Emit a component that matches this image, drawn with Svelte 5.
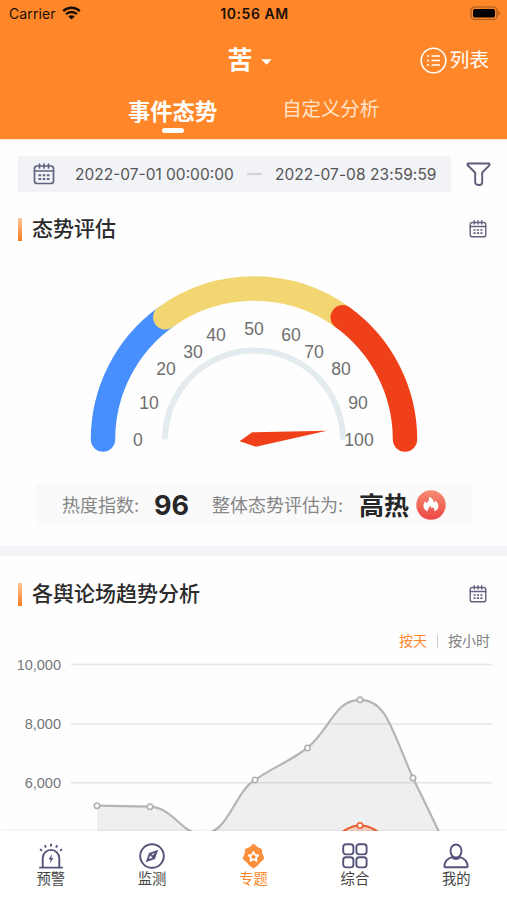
<script lang="ts">
  type Tab = { key: string; label: string };

  const tabs: Tab[] = [
    { key: 'alert', label: '预警' },
    { key: 'monitor', label: '监测' },
    { key: 'topic', label: '专题' },
    { key: 'overview', label: '综合' },
    { key: 'mine', label: '我的' },
  ];

  let activeTab = $state('topic');
  let view = $state<'trend' | 'custom'>('trend');
  let unit = $state<'day' | 'hour'>('day');

  const score = 96;

  // Gauge geometry, in svg units.
  const CX = 254;
  const CY = 196.5;

  function polar(r: number, value: number) {
    const a = Math.PI * (1 - value / 100);
    return [CX + r * Math.cos(a), CY - r * Math.sin(a)];
  }

  function arc(r: number, from: number, to: number) {
    const [x1, y1] = polar(r, from);
    const [x2, y2] = polar(r, to);
    return `M${x1} ${y1}A${r} ${r} 0 0 1 ${x2} ${y2}`;
  }

  const bands = [
    { from: 0, to: 30, color: '#468ffd' },
    { from: 30, to: 70, color: '#f2d672' },
    { from: 70, to: 100, color: '#ef4019' },
  ];

  const ticks = [
    { v: 0, x: 138, y: 197 },
    { v: 10, x: 149, y: 160 },
    { v: 20, x: 166, y: 126 },
    { v: 30, x: 193, y: 109 },
    { v: 40, x: 216, y: 91.5 },
    { v: 50, x: 254, y: 86 },
    { v: 60, x: 291, y: 91.5 },
    { v: 70, x: 314, y: 109 },
    { v: 80, x: 341, y: 126 },
    { v: 90, x: 358, y: 160 },
    { v: 100, x: 359, y: 197 },
  ];

  const needleAngle = (score / 100) * 180 - 180;

  // Trend chart
  const grid = [
    { label: '10,000', y: 13.5 },
    { label: '8,000', y: 73 },
    { label: '6,000', y: 131.7 },
  ];
  const totalLine =
    'M97 154.7L150 155.7C174 157 181 183 202 183C229 183 234 141 255 129C273 116 284 114 307.5 97C331 77 335 48.8 360 48.8C386 48.8 391 77 413 127C427 156 438 178 452 209';
  const totalPoints = [
    [97, 154.7],
    [150, 155.7],
    [202, 183.5],
    [255, 129],
    [307.5, 97],
    [360, 48.8],
    [413, 127],
  ];
  const hotLine = 'M307 205C331 198 340 174.5 360 174.5C381 174.5 389 198 413 205';
</script>

{#snippet calendar(size: number)}
  <svg class="icon" width={size} height={size} viewBox="0 0 22 22">
    <rect x="1.5" y="3" width="19" height="17.5" rx="2.6" />
    <path d="M1.5 8H20.5M6.5 1V5M11 1V5M15.5 1V5" />
    <path class="dots" d="M5.5 12.2H16.5M5.5 16H16.5" />
  </svg>
{/snippet}

<div class="app">
  <header>
    <div class="status">
      <span class="carrier">
        Carrier
        <svg width="19" height="14" viewBox="0 0 19 14">
          <path d="M1.2 5.1A12 12 0 0 1 17.8 5.1M4.1 8.2A7.7 7.7 0 0 1 14.9 8.2" />
          <path class="solid" d="M9.5 13.6L6.3 10.5A4.6 4.6 0 0 1 12.7 10.5Z" />
        </svg>
      </span>
      <span class="clock">10:56 AM</span>
      <svg class="battery" width="31" height="15" viewBox="0 0 31 15">
        <rect class="shell" x="1" y="1" width="26" height="12.5" rx="3.6" />
        <rect x="3" y="3" width="22" height="8.5" rx="1.8" />
        <path class="nub" d="M28.3 5V9.5C30.3 9 30.3 5.5 28.3 5Z" />
      </svg>
    </div>

    <div class="nav">
      <span></span>
      <button class="topic">
        苦
        <svg width="11" height="6" viewBox="0 0 11 6"><path d="M0.4 0.3H10.6L5.5 5.7Z" /></svg>
      </button>
      <button class="list">
        <svg width="27" height="27" viewBox="0 0 27 27">
          <circle cx="13.5" cy="13.5" r="12.3" />
          <path d="M7 9H9M11.5 9H20M7 13.5H9M11.5 13.5H20M7 18H9M11.5 18H20" />
        </svg>
        列表
      </button>
    </div>

    <div class="views">
      <button class:current={view === 'trend'} onclick={() => (view = 'trend')}>事件态势</button>
      <button class:current={view === 'custom'} onclick={() => (view = 'custom')}>自定义分析</button>
    </div>
  </header>

  <main>
    <section class="assess">
      <div class="filter">
        <div class="range">
          {@render calendar(22)}
          <span class="from">2022-07-01 00:00:00</span>
          <i></i>
          <span class="to">2022-07-08 23:59:59</span>
        </div>
        <svg class="funnel" width="25" height="25" viewBox="0 0 25 25">
          <path d="M2.4 1.5H22.6C23.6 1.5 23.9 2.6 23.3 3.3L16.2 10.7V20.4C16.2 23.9 9.2 23.9 9.2 20.4V10.7L1.7 3.3C1.1 2.6 1.4 1.5 2.4 1.5Z" />
        </svg>
      </div>

      <div class="title">
        <h2>态势评估</h2>
        {@render calendar(18)}
      </div>

      <svg class="gauge" width="507" height="241" viewBox="0 0 507 241">
        {#each bands as b}
          <path d={arc(151, b.from, b.to)} stroke={b.color} stroke-width="24.4" stroke-linecap="round" />
        {/each}
        <path d={arc(89, 0, 100)} stroke="#e3ebee" stroke-width="6" />
        {#each ticks as t}
          <text x={t.x} y={t.y + 6.2}>{t.v}</text>
        {/each}
        <path
          class="needle"
          d="M-14.5 0L-1 -7.3L73.5 0L1 7.3Z"
          transform="translate({CX} {CY}) rotate({needleAngle + 0.3})"
        />
      </svg>

      <div class="summary">
        <span class="k1">热度指数:</span>
        <b class="score">{score}</b>
        <span class="k2">整体态势评估为:</span>
        <b class="level">高热</b>
        <svg width="30" height="30" viewBox="0 0 30 30">
          <defs>
            <linearGradient id="flame" x1="0" y1="0" x2="0" y2="1">
              <stop offset="0" stop-color="#f58e72" />
              <stop offset="1" stop-color="#ed4642" />
            </linearGradient>
          </defs>
          <circle cx="15" cy="15" r="14.7" fill="url(#flame)" />
          <path
            d="M11.8 21.4C8.6 20.2 7 17.6 7.5 14.8C7.8 13.3 8.6 12.6 8.9 11.2C9.8 11.8 10.3 12.5 10.5 13.2C12.6 11.5 13.4 9.7 12.9 6.8C16.1 8 17.9 10.3 18 12.8C18.7 12.4 19.3 11.5 19.4 10.5C21.8 12.7 22.8 14.8 22.2 17.2C21.8 19.3 20.4 20.7 18.2 21.4C18.8 19.7 18.3 18 17 16.9C16.7 17.7 16.2 18.2 15.4 18.5C15.4 17.2 14.8 16.3 13.9 15.8C13.8 17.7 11.4 18.8 11.8 21.4Z"
            fill="#fff"
          />
        </svg>
      </div>
    </section>

    <section class="trend">
      <div class="title">
        <h2>各舆论场趋势分析</h2>
        {@render calendar(18)}
      </div>

      <div class="units">
        <button class:current={unit === 'day'} onclick={() => (unit = 'day')}>按天</button>
        <i></i>
        <button class:current={unit === 'hour'} onclick={() => (unit = 'hour')}>按小时</button>
      </div>

      <svg class="chart" width="507" height="210" viewBox="0 0 507 210">
        {#each grid as g}
          <path class="gridline" d="M71 {g.y}H492" />
          <text x="61" y={g.y + 5.2}>{g.label}</text>
        {/each}
        <path class="area" d="{totalLine}L452 210H97Z" />
        <path class="line" d={totalLine} />
        {#each totalPoints as [x, y]}
          <circle class="dot" cx={x} cy={y} r="2.7" />
        {/each}
        <path class="area hot" d="{hotLine}Z" />
        <path class="line hot" d={hotLine} />
        <circle class="dot hot" cx="360" cy="174.5" r="2.7" />
      </svg>
    </section>
  </main>

  <nav class="tabbar">
    {#each tabs as tab}
      <button class:current={activeTab === tab.key} onclick={() => (activeTab = tab.key)}>
        <svg width="26" height="26" viewBox="0 0 26 26">
          {#if tab.key === 'alert'}
            <path d="M1.2 24.6H24.8M4.7 24V15.2A8.3 8.3 0 0 1 21.3 15.2V24" />
            <path d="M2 6.3L4 7.8M6.7 2.3L8 4.4M13 0.8V3.4M19.3 2.3L18 4.4M24 6.3L22 7.8" />
            <path class="fill" d="M14.2 10.8L10.6 16.6H12.7L11.8 20.8L15.4 15H13.3Z" />
          {:else if tab.key === 'monitor'}
            <circle cx="13" cy="13" r="11.8" />
            <path d="M17.7 8.3L15.2 15.2L8.3 17.7L10.8 10.8ZM11.2 11.2L14.8 14.8" />
            <path class="fill" d="M17.7 8.3L15.2 15.2L13 13Z" />
          {:else if tab.key === 'topic'}
            <path class="fill" d="M13.5 0.4L17.3 4L21.8 5.9L22.3 10.2L24.4 15.8L19.9 19.7L17.7 22.6L13.5 25.4L9.3 22.6L7.1 19.7L2.6 15.8L4.7 10.2L5.2 5.9L9.7 4Z" />
            <path class="star" d="M13.5 8.8L15 11.8L18.3 12.3L15.9 14.6L16.5 17.9L13.5 16.3L10.5 17.9L11.1 14.6L8.7 12.3L12 11.8Z" />
          {:else if tab.key === 'overview'}
            <rect x="1.2" y="1.2" width="10.2" height="10.2" rx="2.8" />
            <rect x="14.4" y="1.2" width="10.2" height="10.2" rx="2.8" />
            <rect x="1.2" y="14.2" width="10.2" height="10.2" rx="2.8" />
            <rect x="14.4" y="14.2" width="10.2" height="10.2" rx="2.8" />
          {:else}
            <ellipse cx="13" cy="8" rx="5.5" ry="6.5" />
            <path d="M8.8 14.2C4.5 15.5 1.8 18.8 1.3 23.2C1.3 23.9 1.7 24.3 2.4 24.3H23.6C24.3 24.3 24.7 23.9 24.7 23.2C24.2 18.8 21.5 15.5 17.2 14.2C14.5 16.4 11.5 16.4 8.8 14.2Z" />
          {/if}
        </svg>
        <span>{tab.label}</span>
      </button>
    {/each}
  </nav>
</div>

<style>
  :global(body) {
    background: #fff;
  }

  .app {
    width: 507px;
    height: 900px;
    display: flex;
    flex-direction: column;
    overflow: hidden;
    background: #fefefe;
    color: #333;
    font-family: Inter, 'Noto Sans CJK SC', sans-serif;
  }

  button {
    border: 0;
    padding: 0;
    background: none;
    color: inherit;
    font: inherit;
  }

  svg {
    flex: none;
    display: block;
    fill: none;
  }

  header {
    flex: none;
    height: 139px;
    background: #ff8729;
    box-shadow: 0 1px #ffe6cf;
    color: #fff;
  }

  .status {
    display: grid;
    grid-template-columns: 1fr auto 1fr;
    align-items: center;
    height: 26px;
    padding: 0 6px 0 9px;
    color: #1a0f08;
    font-size: 14px;
  }
  .carrier {
    display: flex;
    align-items: center;
    gap: 6px;
    letter-spacing: 0.1px;
  }
  .carrier svg {
    stroke: #1a0f08;
    stroke-width: 2.4;
  }
  .carrier .solid {
    fill: #1a0f08;
    stroke: none;
  }
  .clock {
    font-weight: 600;
    letter-spacing: 0.55px;
    margin-right: 1px;
  }
  .battery {
    justify-self: end;
    fill: #000;
  }
  .battery .shell {
    fill: none;
    stroke: #a8591c;
    stroke-width: 1.2;
  }
  .battery .nub {
    fill: #a8591c;
  }

  .nav {
    display: grid;
    grid-template-columns: 1fr auto 1fr;
    align-items: center;
    height: 68px;
    padding: 0 18px;
  }
  .topic {
    display: flex;
    align-items: center;
    gap: 8px;
    margin-left: -8px;
    font-size: 25px;
    font-weight: 700;
    line-height: 36px;
  }
  .topic svg {
    fill: #fff;
    margin-top: 4px;
  }
  .list {
    justify-self: end;
    display: flex;
    align-items: center;
    gap: 3px;
    font-size: 19.6px;
    line-height: 28px;
  }
  .list svg {
    stroke: #fff;
    stroke-width: 1.6;
  }

  .views {
    display: flex;
    align-items: flex-start;
    gap: 65px;
    padding-left: 128px;
  }
  .views button {
    position: relative;
    display: flex;
    align-items: flex-start;
    height: 40px;
    line-height: 31px;
    font-size: 19.4px;
    color: #ffe3cb;
  }
  .views .current {
    font-size: 22.3px;
    line-height: 35px;
    font-weight: 700;
    color: #fff;
  }
  .views .current::after {
    content: '';
    position: absolute;
    left: 50%;
    bottom: 1px;
    width: 22px;
    height: 5px;
    margin-left: -11px;
    border-radius: 3px;
    background: #fff;
  }

  main {
    flex: 1;
    min-height: 0;
    overflow: hidden;
  }

  .filter {
    display: flex;
    align-items: center;
    justify-content: space-between;
    padding: 17px 16px 0 18px;
  }
  .range {
    display: flex;
    align-items: center;
    width: 433px;
    height: 36px;
    box-sizing: border-box;
    padding-left: 15px;
    background: #f2f3f7;
    border-radius: 2px;
    font-size: 15.5px;
    color: #555;
  }
  .range span {
    white-space: nowrap;
    width: 160px;
  }
  .range .from {
    margin-left: 20px;
  }
  .range .to {
    letter-spacing: 0.06px;
  }
  .range i {
    width: 15px;
    height: 1.5px;
    margin: 0 13px 0 12px;
    background: #d3d4d8;
  }
  .icon {
    stroke: #62617f;
    stroke-width: 1.7;
    stroke-linecap: round;
  }
  .icon .dots {
    stroke-width: 2;
    stroke-linecap: butt;
    stroke-dasharray: 2.6 1.6;
  }
  .funnel {
    stroke: #5c5b78;
    stroke-width: 1.9;
  }

  .title {
    display: flex;
    align-items: center;
    justify-content: space-between;
    height: 28px;
    padding: 0 20px 0 18px;
  }
  .assess .title {
    margin-top: 23px;
  }
  h2 {
    display: flex;
    align-items: center;
    gap: 10px;
    margin: 0;
    font-size: 21px;
    font-weight: 500;
    line-height: 28px;
    color: #2b2b2b;
  }
  h2::before {
    content: '';
    width: 4px;
    height: 23px;
    background: linear-gradient(#ffc79a, #f47c20);
  }

  .gauge text {
    font-family: 'Liberation Sans', Arial, sans-serif;
    font-size: 17.6px;
    text-anchor: middle;
    fill: #6e6e6e;
  }
  .needle {
    fill: #ef4019;
  }

  .summary {
    display: flex;
    align-items: center;
    height: 42px;
    margin: 0 35px 0 36px;
    padding-left: 26px;
    background: #fafafa;
    font-size: 18px;
    color: #868686;
    white-space: nowrap;
  }
  .summary span,
  .summary b {
    padding-top: 2px;
    line-height: 40px;
  }
  .summary b {
    color: #262626;
  }
  .k1 {
    width: 92px;
  }
  .score {
    width: 58px;
    font-size: 27px;
  }
  .k2 {
    width: 147px;
  }
  .level {
    width: 57px;
    font-size: 25px;
    font-weight: 700;
  }

  .trend {
    margin-top: 20px;
    border-top: 10px solid #f3f4f7;
  }
  .trend .title {
    margin-top: 24px;
  }

  .units {
    display: flex;
    align-items: center;
    justify-content: flex-end;
    gap: 10px;
    height: 20px;
    margin-top: 23px;
    padding-right: 17px;
    font-size: 14px;
    line-height: 20px;
    color: #808080;
  }
  .units .current {
    color: #ff8729;
  }
  .units i {
    width: 1px;
    height: 13px;
    background: #ccc;
  }

  .chart text {
    font-family: 'Liberation Sans', Arial, sans-serif;
    font-size: 14.5px;
    text-anchor: end;
    fill: #74767c;
  }
  .gridline {
    stroke: #e3e4ec;
    stroke-width: 1.4;
  }
  .line {
    stroke: #b5b5b5;
    stroke-width: 2.2;
  }
  .area {
    fill: rgba(180, 180, 180, 0.2);
  }
  .dot {
    fill: #fff;
    stroke: #b0b0b0;
    stroke-width: 1.6;
  }
  .line.hot,
  .dot.hot {
    stroke: #ee5f30;
  }
  .area.hot {
    fill: #f4cfc4;
  }

  .tabbar {
    position: relative;
    flex: none;
    display: grid;
    grid-template-columns: repeat(5, 1fr);
    height: 69px;
    background: #fff;
    box-shadow: 0 -1px 2px rgba(0, 0, 0, 0.06);
  }
  .tabbar button {
    display: flex;
    flex-direction: column;
    align-items: center;
    padding-top: 12px;
    font-size: 14.3px;
    line-height: 20px;
    color: #444;
  }
  .tabbar svg {
    stroke: #54537a;
    stroke-width: 1.9;
  }
  .tabbar .fill {
    fill: #54537a;
    stroke: none;
  }
  .tabbar .current {
    color: #ff8729;
  }
  .tabbar .current .fill {
    fill: #fb8f3c;
  }
  .tabbar .star {
    stroke: #fff;
    stroke-width: 1.7;
    stroke-linejoin: round;
  }
</style>
